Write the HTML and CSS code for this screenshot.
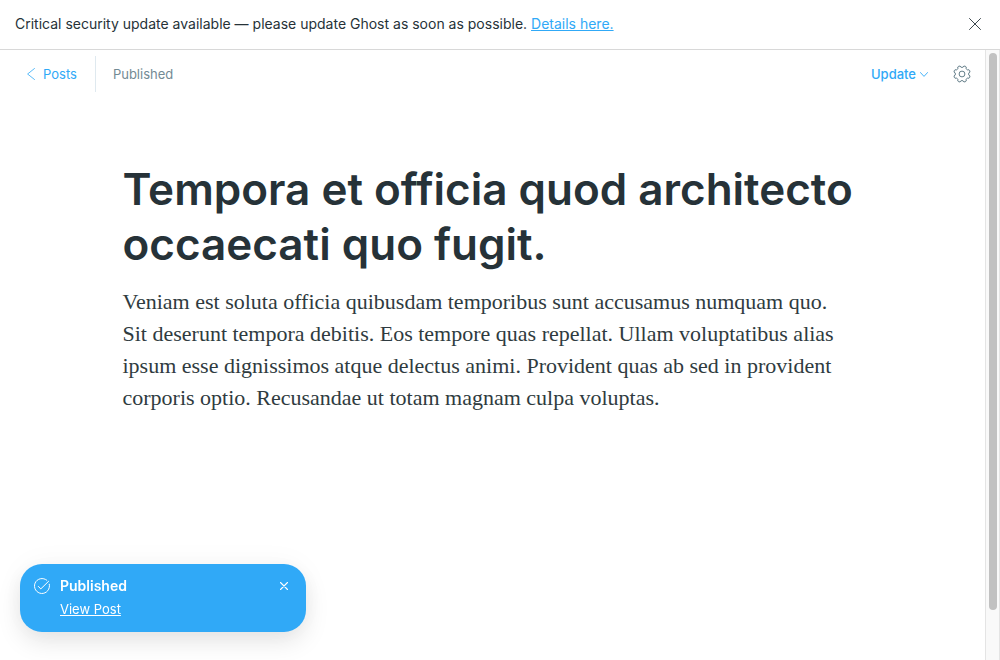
FILE: index.html
```html
<!DOCTYPE html>
<html lang="en">
<head>
<meta charset="utf-8">
<meta name="viewport" content="width=device-width, initial-scale=1">
<title>Editor - Ghost</title>
<link rel="stylesheet" href="styles.css">
</head>
<body>
<div class="app">
  <aside class="alert">
    <p class="alert-text">Critical security update available — please update Ghost as soon as possible. <a href="#details">Details here.</a></p>
    <button class="icon-button" type="button" aria-label="Dismiss alert">
      <svg width="12" height="12" viewBox="0 0 12 12" fill="none" stroke="#3c474d" stroke-width="1" stroke-linecap="round"><path d="M.5.5l11 11M11.5.5l-11 11"/></svg>
    </button>
  </aside>
  <div class="workspace">
    <div class="editor">
      <header class="toolbar">
        <a class="back" href="#posts">
          <svg width="8" height="12" viewBox="0 0 8 12" fill="none" stroke="#30a9f7" stroke-width=".8" stroke-linecap="round" stroke-linejoin="round"><path d="M7.5.5L.6 6l6.9 5.5"/></svg>
          <span>Posts</span>
        </a>
        <span class="status">Published</span>
        <button class="update" type="button">
          <span>Update</span>
          <svg width="8" height="5" viewBox="0 0 8 5" fill="none" stroke="#30a9f7" stroke-width=".9" stroke-linecap="round" stroke-linejoin="round"><path d="M.4.5L4 4.4 7.6.5"/></svg>
        </button>
        <button class="icon-button" type="button" aria-label="Settings">
          <svg width="18" height="18" viewBox="-9 -9 18 18" fill="none" stroke="#54717d" stroke-width=".9" stroke-linejoin="round"><circle r="2.9"/><path d="M7.97 1.91A3 3 0 0 1 6.99 4.28A2 2 0 0 0 4.28 6.99A3 3 0 0 1 1.91 7.97A2 2 0 0 0-1.91 7.97A3 3 0 0 1-4.28 6.99A2 2 0 0 0-6.99 4.28A3 3 0 0 1-7.97 1.91A2 2 0 0 0-7.97-1.91A3 3 0 0 1-6.99-4.28A2 2 0 0 0-4.28-6.99A3 3 0 0 1-1.91-7.97A2 2 0 0 0 1.91-7.97A3 3 0 0 1 4.28-6.99A2 2 0 0 0 6.99-4.28A3 3 0 0 1 7.97-1.91A2 2 0 0 0 7.97 1.91z"/></svg>
        </button>
      </header>
      <main class="post">
        <h1 class="title">Tempora et officia quod architecto occaecati quo fugit.</h1>
        <p class="body-text">Veniam est soluta officia quibusdam temporibus sunt accusamus numquam quo. Sit deserunt tempora debitis. Eos tempore quas repellat. Ullam voluptatibus alias ipsum esse dignissimos atque delectus animi. Provident quas ab sed in provident corporis optio. Recusandae ut totam magnam culpa voluptas.</p>
      </main>
    </div>
    <div class="scroll-track" aria-hidden="true"><div class="scroll-thumb"></div></div>
  </div>
  <aside class="toast" role="status">
    <svg width="16" height="16" viewBox="0 0 16 16" fill="none" stroke="#fff" stroke-width="1" stroke-linecap="round" stroke-linejoin="round"><path d="M4.3 8.400l2.500 2.500 7.800-7.600"/><path d="M12.800 2.200A7.500 7.500 0 1 0 15.300 6.200"/></svg>
    <div class="toast-content">
      <strong class="toast-title">Published</strong>
      <a class="toast-link" href="#view">View Post</a>
    </div>
    <button class="icon-button" type="button" aria-label="Close notification">
      <svg width="8" height="8" viewBox="0 0 8 8" fill="none" stroke="#fff" stroke-width="1.1" stroke-linecap="round"><path d="M.5.5l7 7M7.500.5l-7 7"/></svg>
    </button>
  </aside>
</div>
</body>
</html>
```
FILE: styles.css
```css
* {
  box-sizing: border-box;
}

body {
  margin: 0;
  background: #fff;
  color: #263238;
  font-family: Inter, "Liberation Sans", sans-serif;
  font-size: 14px;
}

a {
  color: #30a9f7;
}

button {
  padding: 0;
  border: 0;
  background: none;
  font: inherit;
  cursor: pointer;
}

svg {
  display: block;
  flex: none;
}

.app {
  display: flex;
  flex-direction: column;
  min-height: 100vh;
}

.alert {
  display: flex;
  align-items: center;
  justify-content: space-between;
  padding: 14px 19px 15px 15px;
  border-bottom: 1px solid #d8d8d8;
}

.alert-text {
  margin: 0;
  line-height: 20px;
}

.icon-button {
  display: grid;
  place-items: center;
}

.workspace {
  display: flex;
  flex: 1;
}

.editor {
  flex: 1;
  min-width: 0;
}

.toolbar {
  display: flex;
  align-items: center;
  padding: 6px 14px 6px 27px;
  font-size: 13px;
}

.back {
  display: flex;
  align-items: center;
  gap: 8px;
  height: 36px;
  padding-right: 18px;
  border-right: 1px solid #dfe9ef;
  text-decoration: none;
}

.status {
  margin-left: 17px;
  color: #738a94;
}

.update {
  display: flex;
  align-items: center;
  gap: 4px;
  margin: 0 25px 0 auto;
  color: #30a9f7;
  font-weight: 500;
}

.post {
  max-width: 740px;
  margin: 0 auto;
  padding-top: 64px;
}

.title {
  margin: 0;
  font-size: 44px;
  font-weight: 600;
  line-height: 55px;
}

.body-text {
  max-width: 728px;
  margin: 14px 0 0;
  color: #2f3b40;
  font-family: "Liberation Serif", serif;
  font-size: 22px;
  line-height: 32px;
}

.scroll-track {
  width: 15px;
  padding: 3px;
  border: solid #e4e4e4;
  border-width: 0 1px;
  background: #f9f9f9;
}

.scroll-thumb {
  width: 8px;
  height: 92.3%;
  border-radius: 4px;
  background: #c1c1c1;
}

.toast {
  position: fixed;
  bottom: 28px;
  left: 20px;
  display: flex;
  align-items: flex-start;
  gap: 10px;
  width: 286px;
  padding: 14px 18px 14px 14px;
  border-radius: 22px;
  background: #30a9f7;
  box-shadow: 0 10px 24px rgba(0, 0, 0, .1), 0 0 30px rgba(0, 0, 0, .04);
  color: #fff;
}

.toast-content {
  display: grid;
  flex: 1;
  gap: 4px;
  margin-top: -2px;
}

.toast-title {
  font-weight: 600;
  line-height: 20px;
}

.toast-link {
  justify-self: start;
  color: #fff;
  font-size: 13px;
  line-height: 18px;
}

.toast .icon-button {
  height: 16px;
}
```
